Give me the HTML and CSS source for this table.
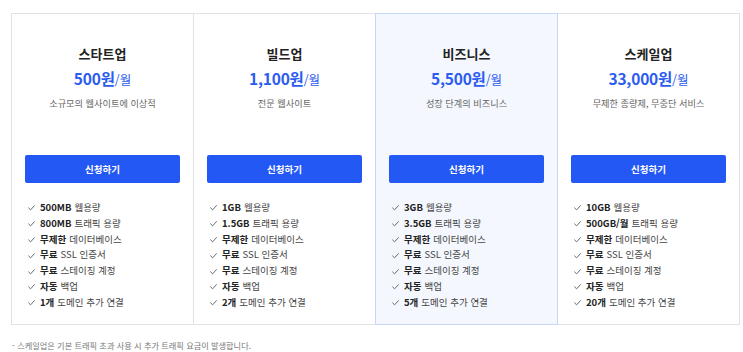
FILE: index.html
```html
<!DOCTYPE html>
<html lang="ko">
<head>
<meta charset="utf-8">
<link rel="stylesheet" href="styles.css">
</head>
<body>
<div class="page">
  <div class="plans">
    <div class="card">
      <h2 class="title">스타트업</h2>
      <div class="price"><b>500원</b><span>/월</span></div>
      <p class="desc">소규모의 웹사이트에 이상적</p>
      <button class="btn">신청하기</button>
      <ul class="features">
        <li><svg class="chk" viewBox="0 0 10 10"><polyline points="1.5,5.2 4,7.6 8.6,2.6"/></svg><b>500MB</b> 웹용량</li>
        <li><svg class="chk" viewBox="0 0 10 10"><polyline points="1.5,5.2 4,7.6 8.6,2.6"/></svg><b>800MB</b> 트래픽 용량</li>
        <li><svg class="chk" viewBox="0 0 10 10"><polyline points="1.5,5.2 4,7.6 8.6,2.6"/></svg><b>무제한</b> 데이터베이스</li>
        <li><svg class="chk" viewBox="0 0 10 10"><polyline points="1.5,5.2 4,7.6 8.6,2.6"/></svg><b>무료</b> SSL 인증서</li>
        <li><svg class="chk" viewBox="0 0 10 10"><polyline points="1.5,5.2 4,7.6 8.6,2.6"/></svg><b>무료</b> 스테이징 계정</li>
        <li><svg class="chk" viewBox="0 0 10 10"><polyline points="1.5,5.2 4,7.6 8.6,2.6"/></svg><b>자동</b> 백업</li>
        <li><svg class="chk" viewBox="0 0 10 10"><polyline points="1.5,5.2 4,7.6 8.6,2.6"/></svg><b>1개</b> 도메인 추가 연결</li>
      </ul>
    </div>
    <div class="card">
      <h2 class="title">빌드업</h2>
      <div class="price"><b>1,100원</b><span>/월</span></div>
      <p class="desc">전문 웹사이트</p>
      <button class="btn">신청하기</button>
      <ul class="features">
        <li><svg class="chk" viewBox="0 0 10 10"><polyline points="1.5,5.2 4,7.6 8.6,2.6"/></svg><b>1GB</b> 웹용량</li>
        <li><svg class="chk" viewBox="0 0 10 10"><polyline points="1.5,5.2 4,7.6 8.6,2.6"/></svg><b>1.5GB</b> 트래픽 용량</li>
        <li><svg class="chk" viewBox="0 0 10 10"><polyline points="1.5,5.2 4,7.6 8.6,2.6"/></svg><b>무제한</b> 데이터베이스</li>
        <li><svg class="chk" viewBox="0 0 10 10"><polyline points="1.5,5.2 4,7.6 8.6,2.6"/></svg><b>무료</b> SSL 인증서</li>
        <li><svg class="chk" viewBox="0 0 10 10"><polyline points="1.5,5.2 4,7.6 8.6,2.6"/></svg><b>무료</b> 스테이징 계정</li>
        <li><svg class="chk" viewBox="0 0 10 10"><polyline points="1.5,5.2 4,7.6 8.6,2.6"/></svg><b>자동</b> 백업</li>
        <li><svg class="chk" viewBox="0 0 10 10"><polyline points="1.5,5.2 4,7.6 8.6,2.6"/></svg><b>2개</b> 도메인 추가 연결</li>
      </ul>
    </div>
    <div class="card featured">
      <h2 class="title">비즈니스</h2>
      <div class="price"><b>5,500원</b><span>/월</span></div>
      <p class="desc">성장 단계의 비즈니스</p>
      <button class="btn">신청하기</button>
      <ul class="features">
        <li><svg class="chk" viewBox="0 0 10 10"><polyline points="1.5,5.2 4,7.6 8.6,2.6"/></svg><b>3GB</b> 웹용량</li>
        <li><svg class="chk" viewBox="0 0 10 10"><polyline points="1.5,5.2 4,7.6 8.6,2.6"/></svg><b>3.5GB</b> 트래픽 용량</li>
        <li><svg class="chk" viewBox="0 0 10 10"><polyline points="1.5,5.2 4,7.6 8.6,2.6"/></svg><b>무제한</b> 데이터베이스</li>
        <li><svg class="chk" viewBox="0 0 10 10"><polyline points="1.5,5.2 4,7.6 8.6,2.6"/></svg><b>무료</b> SSL 인증서</li>
        <li><svg class="chk" viewBox="0 0 10 10"><polyline points="1.5,5.2 4,7.6 8.6,2.6"/></svg><b>무료</b> 스테이징 계정</li>
        <li><svg class="chk" viewBox="0 0 10 10"><polyline points="1.5,5.2 4,7.6 8.6,2.6"/></svg><b>자동</b> 백업</li>
        <li><svg class="chk" viewBox="0 0 10 10"><polyline points="1.5,5.2 4,7.6 8.6,2.6"/></svg><b>5개</b> 도메인 추가 연결</li>
      </ul>
    </div>
    <div class="card">
      <h2 class="title">스케일업</h2>
      <div class="price"><b>33,000원</b><span>/월</span></div>
      <p class="desc">무제한 종량제, 무중단 서비스</p>
      <button class="btn">신청하기</button>
      <ul class="features">
        <li><svg class="chk" viewBox="0 0 10 10"><polyline points="1.5,5.2 4,7.6 8.6,2.6"/></svg><b>10GB</b> 웹용량</li>
        <li><svg class="chk" viewBox="0 0 10 10"><polyline points="1.5,5.2 4,7.6 8.6,2.6"/></svg><b>500GB/월</b> 트래픽 용량</li>
        <li><svg class="chk" viewBox="0 0 10 10"><polyline points="1.5,5.2 4,7.6 8.6,2.6"/></svg><b>무제한</b> 데이터베이스</li>
        <li><svg class="chk" viewBox="0 0 10 10"><polyline points="1.5,5.2 4,7.6 8.6,2.6"/></svg><b>무료</b> SSL 인증서</li>
        <li><svg class="chk" viewBox="0 0 10 10"><polyline points="1.5,5.2 4,7.6 8.6,2.6"/></svg><b>무료</b> 스테이징 계정</li>
        <li><svg class="chk" viewBox="0 0 10 10"><polyline points="1.5,5.2 4,7.6 8.6,2.6"/></svg><b>자동</b> 백업</li>
        <li><svg class="chk" viewBox="0 0 10 10"><polyline points="1.5,5.2 4,7.6 8.6,2.6"/></svg><b>20개</b> 도메인 추가 연결</li>
      </ul>
    </div>
  </div>
  <p class="note">- 스케일업은 기본 트래픽 초과 사용 시 추가 트래픽 요금이 발생합니다.</p>
</div>
</body>
</html>
```

FILE: styles.css
```css
* { box-sizing: border-box; }
html, body { margin: 0; padding: 0; background: #fff; }
body {
  font-family: "Noto Sans CJK KR", "Noto Sans", sans-serif;
  color: #333;
}
.page {
  padding: 13px 0 0 11px;
}
.plans {
  display: flex;
}
.card {
  width: 183px;
  height: 312px;
  border: 1px solid #e2e2e2;
  background: #fff;
  display: flex;
  flex-direction: column;
  align-items: stretch;
  padding: 30px 13px 0 13px;
}
.card + .card { margin-left: -1px; }
.card.featured {
  background: #f4f8fe;
  border-color: #c6d6f7;
  position: relative;
  z-index: 1;
}
.title {
  margin: 0;
  font-size: 13px;
  line-height: 20px;
  font-weight: 700;
  color: #222;
  text-align: center;
}
.price {
  margin-top: 3px;
  text-align: center;
  line-height: 22px;
  color: #2d5cf0;
}
.price b {
  font-size: 15.5px;
  font-weight: 700;
  letter-spacing: -0.2px;
}
.price span {
  font-size: 12.5px;
  font-weight: 400;
}
.desc {
  margin: 5px 0 0;
  text-align: center;
  font-size: 9.2px;
  line-height: 14px;
  color: #666;
}
.btn {
  margin-top: 45px;
  height: 28px;
  border: 0;
  border-radius: 2px;
  background: #2458f5;
  color: #fff;
  font-family: inherit;
  font-size: 9.5px;
  font-weight: 700;
  padding: 0;
}
.features {
  list-style: none;
  margin: 17px 0 0;
  padding: 0 0 0 2px;
}
.features li {
  display: flex;
  align-items: center;
  font-size: 9.5px;
  line-height: 15.8px;
  color: #444;
  white-space: nowrap;
}
.features b {
  font-weight: 700;
  color: #222;
  margin-right: 3px;
}
.chk {
  width: 9px;
  height: 9px;
  margin-right: 4px;
  fill: none;
  stroke: #666;
  stroke-width: 1.1;
  flex: none;
}
.note {
  margin: 14px 0 0 1px;
  font-size: 8.2px;
  line-height: 12px;
  color: #777;
}
```
